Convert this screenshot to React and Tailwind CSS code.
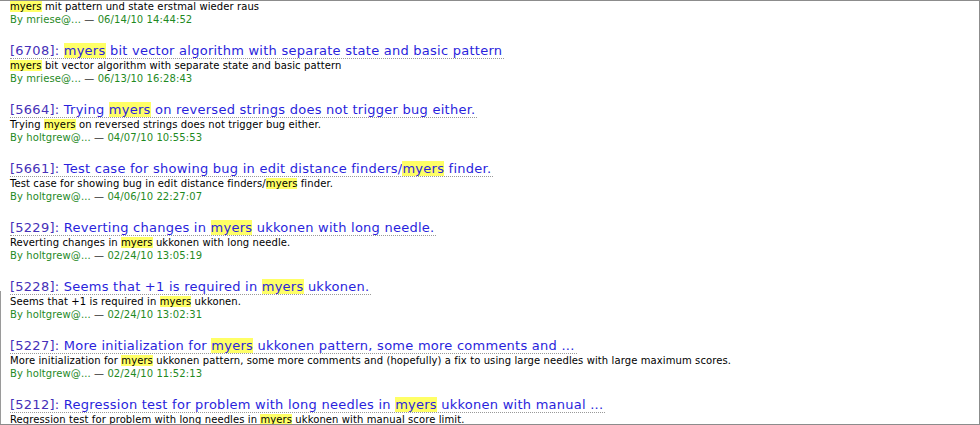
import React from 'react';

const items = [
  {
    id: null,
    title: null,
    desc: [['myers', true], [' mit pattern und state erstmal wieder raus', false]],
    by: 'mriese@...',
    date: '06/14/10 14:44:52',
  },
  {
    id: '6708',
    title: [['myers', true], [' bit vector algorithm with separate state and basic pattern', false]],
    desc: [['myers', true], [' bit vector algorithm with separate state and basic pattern', false]],
    by: 'mriese@...',
    date: '06/13/10 16:28:43',
  },
  {
    id: '5664',
    title: [['Trying ', false], ['myers', true], [' on reversed strings does not trigger bug either.', false]],
    desc: [['Trying ', false], ['myers', true], [' on reversed strings does not trigger bug either.', false]],
    by: 'holtgrew@...',
    date: '04/07/10 10:55:53',
  },
  {
    id: '5661',
    title: [['Test case for showing bug in edit distance finders/', false], ['myers', true], [' finder.', false]],
    desc: [['Test case for showing bug in edit distance finders/', false], ['myers', true], [' finder.', false]],
    by: 'holtgrew@...',
    date: '04/06/10 22:27:07',
  },
  {
    id: '5229',
    title: [['Reverting changes in ', false], ['myers', true], [' ukkonen with long needle.', false]],
    desc: [['Reverting changes in ', false], ['myers', true], [' ukkonen with long needle.', false]],
    by: 'holtgrew@...',
    date: '02/24/10 13:05:19',
  },
  {
    id: '5228',
    title: [['Seems that +1 is required in ', false], ['myers', true], [' ukkonen.', false]],
    desc: [['Seems that +1 is required in ', false], ['myers', true], [' ukkonen.', false]],
    by: 'holtgrew@...',
    date: '02/24/10 13:02:31',
  },
  {
    id: '5227',
    title: [['More initialization for ', false], ['myers', true], [' ukkonen pattern, some more comments and ...', false]],
    desc: [['More initialization for ', false], ['myers', true], [' ukkonen pattern, some more comments and (hopefully) a fix to using large needles with large maximum scores.', false]],
    by: 'holtgrew@...',
    date: '02/24/10 11:52:13',
  },
  {
    id: '5212',
    title: [['Regression test for problem with long needles in ', false], ['myers', true], [' ukkonen with manual ...', false]],
    desc: [['Regression test for problem with long needles in ', false], ['myers', true], [' ukkonen with manual score limit.', false]],
    by: 'holtgrew@...',
    date: '02/24/10 10:41:27',
  },
];

const Parts = ({ parts }) =>
  parts.map(([text, hit], i) =>
    hit ? (
      <span key={i} className="bg-[#ffff66]">{text}</span>
    ) : (
      <span key={i}>{text}</span>
    )
  );

const Entry = ({ item }) => (
  <div className="mb-[17px]">
    {item.title && (
      <div className="flex h-[16px]">
        <a className="block h-[16px] whitespace-nowrap border-b border-dotted border-[#999] pr-[2px] text-[13px] leading-[15px] tracking-[0.25px] text-[#2a1fdc]">
          <span className="text-[#4630b8]">[{item.id}]: </span>
          <Parts parts={item.title} />
        </a>
      </div>
    )}
    <div className="h-[13px] text-[10px] leading-[13px] tracking-[0.1px] text-black whitespace-nowrap">
      <Parts parts={item.desc} />
    </div>
    <div className="h-[13px] text-[10px] leading-[13px] tracking-[0.1px] text-[#1f8a1f] whitespace-nowrap">
      By {item.by} <span className="text-[#333]">—</span> {item.date}
    </div>
  </div>
);

export default function App() {
  return (
    <div
      className="flex h-[425px] w-[980px] overflow-hidden border-t border-r border-b border-[#8c8c8c] bg-white"
      style={{ fontFamily: '"DejaVu Sans", Verdana, sans-serif' }}
    >
      <div className="w-px shrink-0 bg-[linear-gradient(to_bottom,transparent_290px,#9a9a9a_290px)]" />
      <div className="-mt-px flex-1 pl-[9px]">
        {items.map((item, i) => (
          <Entry key={i} item={item} />
        ))}
      </div>
    </div>
  );
}
